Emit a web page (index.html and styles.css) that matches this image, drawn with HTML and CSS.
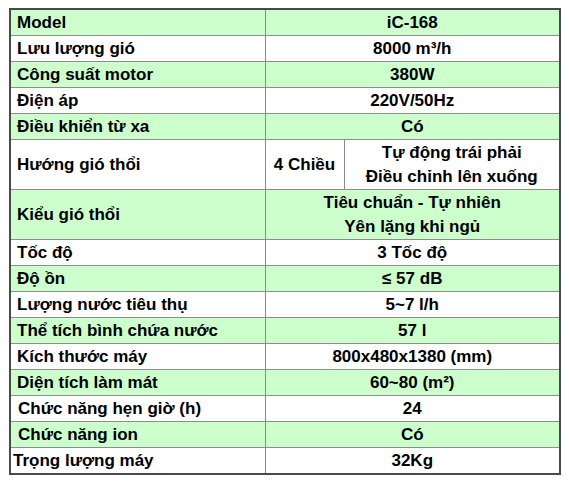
FILE: index.html
```html
<!DOCTYPE html>
<html lang="vi">
<head>
<meta charset="utf-8">
<title>iC-168</title>
<link rel="stylesheet" href="styles.css">
</head>
<body>
<table class="spec">
  <colgroup>
    <col class="c1">
    <col class="c2">
    <col class="c3">
  </colgroup>
  <tbody>
    <tr class="g"><td class="k">Model</td><td class="v" colspan="2">iC-168</td></tr>
    <tr><td class="k">Lưu lượng gió</td><td class="v" colspan="2">8000 m³/h</td></tr>
    <tr class="g"><td class="k">Công suất motor</td><td class="v" colspan="2">380W</td></tr>
    <tr><td class="k">Điện áp</td><td class="v" colspan="2">220V/50Hz</td></tr>
    <tr class="g"><td class="k">Điều khiển từ xa</td><td class="v" colspan="2">Có</td></tr>
    <tr class="tall"><td class="k">Hướng gió thổi</td><td class="v">4 Chiều</td><td class="v">Tự động trái phải<br>Điều chỉnh lên xuống</td></tr>
    <tr class="g tall"><td class="k">Kiểu gió thổi</td><td class="v" colspan="2">Tiêu chuẩn - Tự nhiên<br>Yên lặng khi ngủ</td></tr>
    <tr><td class="k">Tốc độ</td><td class="v" colspan="2">3 Tốc độ</td></tr>
    <tr class="g"><td class="k">Độ ồn</td><td class="v" colspan="2">≤ 57 dB</td></tr>
    <tr><td class="k">Lượng nước tiêu thụ</td><td class="v" colspan="2">5~7 l/h</td></tr>
    <tr class="g"><td class="k">Thể tích bình chứa nước</td><td class="v" colspan="2">57 l</td></tr>
    <tr><td class="k">Kích thước máy</td><td class="v" colspan="2">800x480x1380 (mm)</td></tr>
    <tr class="g"><td class="k">Diện tích làm mát</td><td class="v" colspan="2">60~80 (m²)</td></tr>
    <tr><td class="k k7">Chức năng hẹn giờ (h)</td><td class="v" colspan="2">24</td></tr>
    <tr class="g"><td class="k k7">Chức năng ion</td><td class="v" colspan="2">Có</td></tr>
    <tr><td class="k k2">Trọng lượng máy</td><td class="v" colspan="2">32Kg</td></tr>
  </tbody>
</table>
</body>
</html>
```
FILE: styles.css
```css
html, body {
  margin: 0;
  padding: 0;
  background: #ffffff;
}

body {
  font-family: "Liberation Sans", Arial, sans-serif;
  font-weight: bold;
  font-size: 17px;
  color: #000000;
}

.spec {
  margin: 8px 0 0 9px;
  border-collapse: collapse;
  table-layout: fixed;
  width: 550px;
  border: 2px solid #4a4a4a;
}

.c1 { width: 255px; }
.c2 { width: 79px; }
.c3 { width: 216px; }

.spec td {
  border: 1px solid #8c8c8c;
  height: 25px;
  padding: 0;
  line-height: 24px;
  white-space: nowrap;
  vertical-align: middle;
}

.spec tr.tall td {
  height: 49px;
}

.spec tr.g td {
  background: #ccffcc;
}

.k {
  text-align: left;
  padding-left: 6px !important;
}

.k7 {
  padding-left: 7px !important;
}

.k2 {
  padding-left: 2px !important;
}

.v {
  text-align: center;
}
```
